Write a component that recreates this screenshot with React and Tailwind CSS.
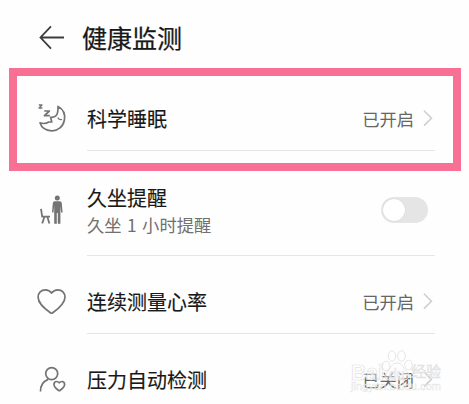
import React from "react";
import clsx from "clsx";

function BackIcon() {
  return (
    <svg className="h-8 w-8" viewBox="0 0 32 32" fill="none" stroke="#3c3c3c" strokeWidth="1.8">
      <path d="M15 4.3 4.5 15.5 15 26.7M4.5 15.5H28" />
    </svg>
  );
}

function ChevronIcon() {
  return (
    <svg className="h-4.5 w-3" viewBox="0 0 12 18" fill="none" stroke="#cfcfcf" strokeWidth="1.6">
      <path d="M1 .8 8.4 8.2 1 15.6" />
    </svg>
  );
}

function SleepIcon() {
  return (
    <svg className="h-8 w-8" viewBox="0 0 32 32" fill="none" stroke="#747474" strokeWidth="1.7" strokeLinejoin="round">
      <path d="M2.8 2H6L3 5H6.4" strokeWidth="1.3" />
      <path d="M8.2 8H13.4L8.4 12.6H13.8" />
      <path d="M22 3.4C27 6 29.4 11.2 28.4 17C27.2 23.6 22 28 15.8 27.8C10 27.6 5.4 24.4 4 19.8C7 20.9 10.2 20.6 12.8 19H15.8L14.6 14.4C18.4 14.6 21 12.6 21.6 9.4C22 7.2 22.2 5.4 22 3.4Z" />
      <path d="M21.8 14.4C22.6 16.2 24.2 17 26 16.4" strokeWidth="1.2" />
    </svg>
  );
}

function SedentaryIcon() {
  return (
    <svg className="-mt-[2px] h-8 w-8" viewBox="0 0 32 32" fill="#747474">
      <circle cx="21.3" cy="4" r="2.5" />
      <path d="M18.8 7.2H23.8C25 7.2 25.6 8 25.8 9.2L26.6 18.6H25.1L24.4 12V29.7H21.8V19H20.8V29.7H18.2V12L17.5 18.6H16L16.8 9.2C17 8 17.6 7.2 18.8 7.2Z" />
      <path d="M5 14.8 6.2 22.6H14M8.4 23 6.2 29.4M11.4 23 13.4 29.4" fill="none" stroke="#747474" strokeWidth="1.8" />
    </svg>
  );
}

function HeartIcon() {
  return (
    <svg className="h-8 w-8" viewBox="0 0 32 32" fill="none" stroke="#747474" strokeWidth="1.7" strokeLinejoin="round">
      <path d="M15.6 7C13.8 4.6 11.6 3.8 9.4 3.8C5.2 3.8 2.1 7 2.1 11.2C2.1 17 7.4 21.6 14.4 26.8C15.2 27.4 16 27.4 16.8 26.8C23.8 21.6 29 17 29 11.2C29 7 26 3.8 21.8 3.8C19.6 3.8 17.4 4.6 15.6 7Z" />
    </svg>
  );
}

function StressIcon() {
  return (
    <svg className="h-8 w-8" viewBox="0 0 32 32" fill="none" stroke="#747474" strokeWidth="1.7" strokeLinejoin="round">
      <circle cx="15.7" cy="9.6" r="6" />
      <path d="M4.5 27.4C4.5 21.4 7.2 17.2 12.2 15.4" />
      <path d="M23.3 18.8C22.4 17.7 21.5 17.5 20.7 17.5C19.1 17.5 18 18.7 18 20.4C18 22.8 20.2 24.6 22.7 26.5C23.1 26.8 23.5 26.8 23.9 26.5C26.4 24.6 28.6 22.8 28.6 20.4C28.6 18.7 27.5 17.5 25.9 17.5C25.1 17.5 24.2 17.7 23.3 18.8Z" />
    </svg>
  );
}

function Toggle() {
  return (
    <button
      type="button"
      role="switch"
      aria-checked="false"
      className="-mt-[2px] mr-[7px] flex h-[26px] w-[47px] items-center rounded-full bg-[#e5e5e5] pl-[2px]"
    >
      <span className="h-[22px] w-[22px] rounded-full bg-white shadow-[0_0_1px_#bbb]" />
    </button>
  );
}

function SettingRow({ icon, title, subtitle, status, divider = true, className, innerClassName }) {
  return (
    <div className={clsx("flex gap-[19px]", className)}>
      <div className={clsx("flex items-center", innerClassName)}>{icon}</div>
      <div
        className={clsx(
          "flex w-[348px] items-center justify-between border-b",
          divider ? "border-[#e6e6e6]" : "border-transparent",
          innerClassName
        )}
      >
        <div>
          <div className="text-[20px] leading-[28px] text-[#181818] [-webkit-text-stroke:0.15px_#181818]">{title}</div>
          {subtitle && (
            <div className="text-[17.3px] leading-[26px] text-[#707070] [word-spacing:1.6px]">{subtitle}</div>
          )}
        </div>
        {status ? (
          <div className="flex items-center gap-[9px] text-[17.3px] leading-[26px] text-[#666]">
            {status}
            <ChevronIcon />
          </div>
        ) : (
          <Toggle />
        )}
      </div>
    </div>
  );
}

function Watermark() {
  return (
    <svg
      className="absolute top-[345px] left-[345px] h-[52px] w-[105px]"
      viewBox="0 0 105 52"
      fill="#fff"
      fillOpacity="0.4"
      stroke="#e2e2e2"
      strokeWidth="0.9"
      fontFamily="Liberation Sans, Noto Sans CJK SC, sans-serif"
    >
      <ellipse cx="41" cy="21" rx="3.8" ry="4.8" />
      <ellipse cx="47" cy="11" rx="3.8" ry="5.2" />
      <ellipse cx="56.5" cy="11" rx="3.8" ry="5.2" />
      <ellipse cx="63.5" cy="20" rx="3.8" ry="4.8" />
      <path d="M52 18C46 18 46 24 42 27C37 32 42 36 47 35H57C63 36 67 31 62 27C58 24 58 18 52 18Z" />
      <text x="6" y="34.5" fontSize="22" fontWeight="700" strokeWidth="0.7" textLength="33" lengthAdjust="spacingAndGlyphs">Bai</text>
      <text x="44" y="34" fontSize="14" strokeWidth="0.6">du</text>
      <text x="66" y="32" fontSize="15" strokeWidth="0.4" fill="#e6e6e6" fillOpacity="1" textLength="30">经验</text>
      <text x="6" y="45" fontSize="11" strokeWidth="0.4" textLength="90">jingyan.baidu.com</text>
    </svg>
  );
}

export default function App() {
  return (
    <div className="relative h-[404px] w-[469px] overflow-hidden bg-[#fefefe] font-['Noto_Sans_CJK_SC',sans-serif]">
      <header className="flex h-[68px] items-center gap-[14px] pt-[7px] pl-[36px]">
        <BackIcon />
        <h1 className="-mt-[1px] text-[25px] leading-[36px] text-[#181818] [-webkit-text-stroke:0.25px_#181818]">健康监测</h1>
      </header>
      <section className="ml-[9px] h-[103px] w-[452px] border-8 border-[#f97095]">
        <SettingRow className="mt-[11px] h-[64px] pl-[19px]" icon={<SleepIcon />} title="科学睡眠" status="已开启" />
      </section>
      <main className="pl-[36px]">
        <SettingRow
          className="-mt-[8px] h-[93px]"
          innerClassName="pt-[3px]"
          icon={<SedentaryIcon />}
          title="久坐提醒"
          subtitle="久坐 1 小时提醒"
        />
        <SettingRow className="h-[78px]" innerClassName="pt-[14px]" icon={<HeartIcon />} title="连续测量心率" status="已开启" />
        <SettingRow
          className="h-[78px]"
          innerClassName="pt-[14px]"
          icon={<StressIcon />}
          title="压力自动检测"
          status="已关闭"
          divider={false}
        />
      </main>
      <Watermark />
    </div>
  );
}
